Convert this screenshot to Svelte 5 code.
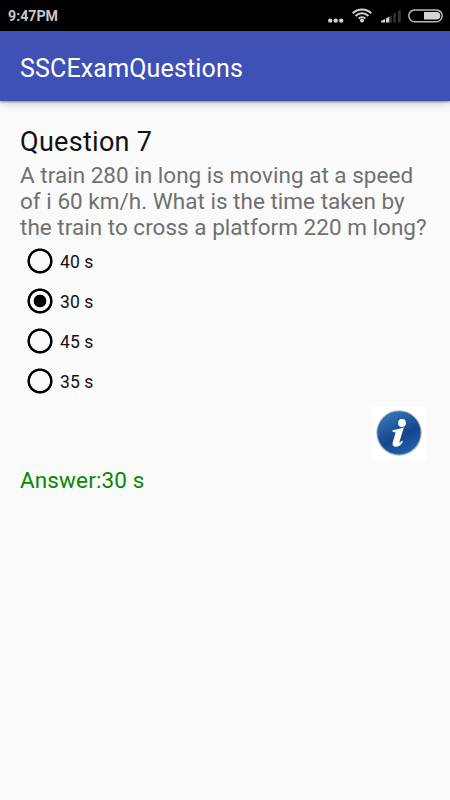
<script>
	const options = ['40 s', '30 s', '45 s', '35 s'];
	const answer = '30 s';

	let selected = '30 s';
	let showAnswer = true;
</script>

<div class="screen">
	<div class="status">
		<span class="time">9:47PM</span>
		<svg width="122" height="31" viewBox="328 0 122 31" fill="none">
			<g fill="#d0d0d0">
				<circle cx="330.2" cy="20.6" r="2.2" />
				<circle cx="335.7" cy="20.6" r="2.2" />
				<circle cx="341.2" cy="20.6" r="2.2" />
				<circle cx="362" cy="20.5" r="2" />
			</g>
			<path
				d="M352.7 13.3a13.2 13.2 0 0 1 18.6 0M355.6 16a9 9 0 0 1 12.8 0M358.6 18.6a5 5 0 0 1 6.8 0"
				stroke="#d0d0d0"
				stroke-width="2"
			/>
			<path d="M381 22.5v-1.5l4-2v3.5zM386 22.5v-3.9l3.4-2v5.9z" fill="#d0d0d0" />
			<path d="M389.9 22.5v-6l1.9-1.3v7.3zM393.3 22.5v-8.5l2.5-1.6v10.1zM397.8 22.5V11.3l3-2v13.2z" fill="#333" />
			<rect x="408.8" y="9.9" width="33.4" height="11.8" rx="5.9" stroke="#b8b8b8" stroke-width="1.5" />
			<path d="M424 12h12.5a3.8 3.8 0 0 1 0 7.6H424z" fill="#d5d5d5" />
		</svg>
	</div>

	<header>
		<h1>SSCExamQuestions</h1>
	</header>

	<main>
		<h2>Question 7</h2>
		<p class="question">
			<span>A train 280 in long is moving at a speed</span>
			<span>of i 60 km/h. What is the time taken by</span>
			<span>the train to cross a platform 220 m long?</span>
		</p>

		<div class="options">
			{#each options as option}
				<label>
					<input type="radio" name="answer" value={option} bind:group={selected} />
					<span>{option}</span>
				</label>
			{/each}
		</div>

		<button class="info" aria-label="Show answer" on:click={() => (showAnswer = !showAnswer)}>
			<svg width="54" height="53" viewBox="0 0 54 53">
				<defs>
					<linearGradient id="ball" x1="0.2" y1="0" x2="0.7" y2="1">
						<stop offset="0" stop-color="#3c78b6" />
						<stop offset="0.45" stop-color="#1c5299" />
						<stop offset="0.6" stop-color="#164689" />
						<stop offset="1" stop-color="#1e62b0" />
					</linearGradient>
				</defs>
				<circle cx="27" cy="26" r="22.7" fill="#a3b5c8" />
				<circle cx="27" cy="25.8" r="21.6" fill="url(#ball)" />
				<circle cx="30" cy="16" r="3.9" fill="#fff" />
				<path
					d="M21.2 23.6c3.2-.2 6.2-1 9.7-2.3l-4.3 14.2c-.5 1.6.7 1.5 3.9-1.3-1.8 3.3-4.2 4.9-6.5 4.9-2.7 0-3.3-1.8-2.5-4.4l2.7-8.4c.4-1.4-.6-1.7-3-1.8z"
					fill="#fff"
					stroke="#fff"
					stroke-width="1.2"
				/>
			</svg>
		</button>

		{#if showAnswer}
			<p class="answer">Answer:{answer}</p>
		{/if}
	</main>
</div>

<style>
	:global(body) {
		background: #fafafa;
	}

	.screen {
		width: 450px;
		height: 800px;
		overflow: hidden;
		font-family: Roboto, sans-serif;
		background: #fafafa;
	}

	.status {
		display: flex;
		justify-content: space-between;
		height: 31px;
		background: #000;
	}

	.time {
		padding-left: 8px;
		font-size: 14.2px;
		font-weight: 700;
		line-height: 33px;
		color: #c8c8c8;
	}

	header {
		display: flex;
		align-items: center;
		height: 70px;
		padding: 0 20px;
		background: #3f51b5;
		box-shadow: 0 1px 2px rgba(0, 0, 0, 0.38), 0 3px 8px rgba(0, 0, 0, 0.16);
	}

	h1 {
		margin: 4px 0 0;
		font-size: 25px;
		font-weight: 400;
		letter-spacing: 0.16px;
		color: #fff;
	}

	main {
		display: flex;
		flex-direction: column;
		padding: 23px 24px 0 20px;
	}

	h2 {
		margin: 0;
		font-size: 27px;
		font-weight: 400;
		line-height: 36px;
		letter-spacing: 0.3px;
		color: #111;
	}

	p {
		margin: 0;
	}

	.question {
		margin-top: 2px;
		font-size: 22.5px;
		line-height: 26px;
		letter-spacing: 0.02px;
		color: #707070;
	}

	.question span {
		display: block;
		white-space: nowrap;
	}

	.options {
		margin-top: 1px;
	}

	label {
		display: flex;
		align-items: center;
		height: 40px;
		font-size: 17.5px;
		letter-spacing: 0.1px;
		color: #111;
	}

	label span {
		margin-top: 2px;
	}

	input {
		appearance: none;
		width: 26px;
		height: 26px;
		margin: 0 7px 0 7px;
		background: radial-gradient(circle, transparent 9.7px, #000 10.3px, #000 12.2px, transparent 12.9px);
	}

	input:checked {
		background: radial-gradient(
			circle,
			#000 6px,
			transparent 6.7px,
			transparent 9.7px,
			#000 10.3px,
			#000 12.2px,
			transparent 12.9px
		);
	}

	.info {
		align-self: flex-end;
		width: 54px;
		height: 53px;
		margin-top: 6px;
		padding: 0;
		border: none;
		background: #fff;
	}

	.info svg {
		display: block;
	}

	.answer {
		margin-top: 7px;
		font-size: 22.5px;
		line-height: 27px;
		letter-spacing: 0.12px;
		color: #078907;
	}
</style>
